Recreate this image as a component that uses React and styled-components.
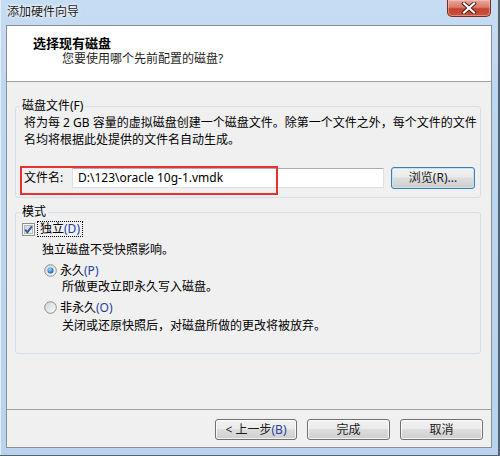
import React from "react";
import styled, { createGlobalStyle } from "styled-components";

const GlobalStyle = createGlobalStyle`
  html, body { margin: 0; padding: 0; }
  body {
    width: 500px;
    height: 456px;
    overflow: hidden;
    font-family: "Noto Sans", "Noto Sans CJK SC", sans-serif;
    font-size: 12px;
    color: #000;
  }
`;

const Window = styled.div`
  width: 500px;
  height: 456px;
  box-sizing: border-box;
  display: flex;
  flex-direction: column;
  padding: 0 8px 8px 6px;
  background: linear-gradient(180deg, #c6dcf3 0%, #bed7f0 20%, #b9d3ee 100%);
  box-shadow: inset -2px -1px 0 #56636f, inset 1px 0 0 #e2eef9;
`;

const TitleBar = styled.div`
  height: 25px;
  flex-shrink: 0;
  display: flex;
  justify-content: space-between;
  align-items: flex-start;
`;

const Title = styled.div`
  padding-left: 1px;
  line-height: 24px;
  font-size: 12px;
  color: #1a1a1a;
  text-shadow: 0 0 5px #fff, 0 0 3px #fff;
`;

const CloseButton = styled.div`
  width: 44px;
  height: 17px;
  margin-right: 1px;
  box-sizing: border-box;
  border: 1px solid #7b2a20;
  border-top: none;
  border-radius: 0 0 5px 5px;
  background: linear-gradient(180deg, #e8a99c 0%, #d97a6a 45%, #c4432f 55%, #c9533e 100%);
  box-shadow: inset 0 0 0 1px rgba(255, 210, 200, 0.45);
  display: flex;
  align-items: center;
  justify-content: center;
`;

const Client = styled.div`
  flex: 1;
  min-height: 0;
  display: flex;
  flex-direction: column;
  border: 1px solid #8b8f94;
  background: #f0f0f0;
`;

const Header = styled.div`
  height: 56px;
  box-sizing: border-box;
  flex-shrink: 0;
  background: #fff;
  border-bottom: 1px solid #a0a0a0;
  padding: 9px 0 0 26px;
`;

const HeaderTitle = styled.div`
  font-size: 13px;
  font-weight: bold;
  line-height: 16px;
`;

const HeaderSub = styled.div`
  margin-left: 29px;
  line-height: 16px;
  color: #1e1e1e;
`;

const Body = styled.div`
  flex: 1;
  padding: 16px 10px 0 8px;
`;

const Group = styled.fieldset`
  margin: ${(p) => p.$top || 0}px 0 0 0;
  padding: 0 0 ${(p) => p.$bottom || 0}px 0;
  border: 1px solid #d5dfe5;
  border-radius: 3px;
  min-width: 0;
`;

const Legend = styled.legend`
  margin-left: 4px;
  padding: 0 2px;
  line-height: 16px;
`;

const Para = styled.div`
  padding-left: 8px;
  line-height: 17px;
  white-space: nowrap;
`;

const FileRow = styled.div`
  position: relative;
  margin: 19px 0 0 8px;
  height: 22px;
  display: flex;
  align-items: center;
`;

const FieldLabel = styled.div`
  width: 48px;
  line-height: 16px;
`;

const TextBox = styled.div`
  width: 312px;
  height: 20px;
  box-sizing: border-box;
  border: 1px solid #dbdfe6;
  border-top-color: #abadb3;
  background: #fff;
  padding-left: 5px;
  line-height: 18px;
  white-space: nowrap;
`;

const Highlight = styled.div`
  position: absolute;
  left: -4px;
  top: -1px;
  width: 258px;
  height: 29px;
  box-sizing: border-box;
  border: 2px solid #e8322f;
  pointer-events: none;
`;

const Button = styled.div`
  width: ${(p) => p.$w || 83}px;
  height: ${(p) => p.$h || 21}px;
  margin-left: ${(p) => p.$ml || 0}px;
  box-sizing: border-box;
  border: 1px solid ${(p) => (p.$focused ? "#3c7fb1" : "#707070")};
  border-radius: 3px;
  background: linear-gradient(180deg, #f2f2f2 0%, #ebebeb 45%, #dddddd 50%, #cfcfcf 100%);
  box-shadow: inset 0 0 0 1px ${(p) => (p.$focused ? "#bfe3f7" : "rgba(255,255,255,0.75)")};
  display: flex;
  align-items: center;
  justify-content: center;
  line-height: 16px;
  color: #1a1a1a;
`;

const CheckRow = styled.div`
  margin-top: 1px;
  padding-left: 6px;
  height: 16px;
  display: flex;
  align-items: center;
`;

const FocusLabel = styled.span`
  margin-left: 2px;
  padding: 0 2px;
  border: 1px dotted #000;
  line-height: 14px;
`;

const Note = styled.div`
  margin-top: ${(p) => p.$top || 0}px;
  padding-left: ${(p) => p.$indent}px;
  line-height: 16px;
  white-space: nowrap;
`;

const RadioRow = styled.div`
  margin-top: ${(p) => p.$top || 0}px;
  padding-left: 28px;
  height: 16px;
  display: flex;
  align-items: center;
  gap: 3px;
`;

const Mnemonic = styled.span`
  color: #23409c;
`;

const Footer = styled.div`
  flex-shrink: 0;
  border-top: 1px solid #a0a0a0;
  padding: 9px 8px 7px 0;
  display: flex;
  justify-content: flex-end;
`;

function CheckBox() {
  return (
    <svg width="13" height="13" viewBox="0 0 13 13">
      <defs>
        <linearGradient id="cbIn" x1="0" y1="0" x2="1" y2="1">
          <stop offset="0" stopColor="#cbcfd5" />
          <stop offset="1" stopColor="#f6f6f6" />
        </linearGradient>
      </defs>
      <rect x="0.5" y="0.5" width="12" height="12" fill="#f4f4f4" stroke="#8e8f8f" />
      <rect x="2.5" y="2.5" width="8" height="8" fill="url(#cbIn)" stroke="#b4b9bf" />
      <path d="M3.2 6.6 L5.4 9.2 L9.9 3.4" stroke="#3d5496" strokeWidth="1.9" fill="none" />
    </svg>
  );
}

function Radio({ checked }) {
  return (
    <svg width="13" height="13" viewBox="0 0 13 13">
      <defs>
        <linearGradient id="rbOut" x1="0" y1="0" x2="1" y2="1">
          <stop offset="0" stopColor="#d0d3d8" />
          <stop offset="1" stopColor="#fbfbfb" />
        </linearGradient>
        <radialGradient id="rbDot" cx="0.4" cy="0.35" r="0.7">
          <stop offset="0" stopColor="#a8e2fb" />
          <stop offset="0.6" stopColor="#3a8ad6" />
          <stop offset="1" stopColor="#1d4f9e" />
        </radialGradient>
      </defs>
      <circle cx="6.5" cy="6.5" r="5.8" fill="url(#rbOut)" stroke="#8e8f8f" />
      {checked && <circle cx="6.5" cy="6.5" r="3" fill="url(#rbDot)" />}
    </svg>
  );
}

function CloseGlyph() {
  return (
    <svg width="16" height="12" viewBox="0 0 16 12">
      <path d="M3 1.5 L13 10.5 M13 1.5 L3 10.5" stroke="#4a1e18" strokeWidth="4" strokeLinecap="square" />
      <path d="M3 1.5 L13 10.5 M13 1.5 L3 10.5" stroke="#ffffff" strokeWidth="2.2" strokeLinecap="square" />
    </svg>
  );
}

export default function App() {
  return (
    <>
      <GlobalStyle />
      <Window>
        <TitleBar>
          <Title>添加硬件向导</Title>
          <CloseButton>
            <CloseGlyph />
          </CloseButton>
        </TitleBar>
        <Client>
          <Header>
            <HeaderTitle>选择现有磁盘</HeaderTitle>
            <HeaderSub>您要使用哪个先前配置的磁盘?</HeaderSub>
          </Header>
          <Body>
            <Group $bottom={8}>
              <Legend>磁盘文件(F)</Legend>
              <Para>
                将为每 2 GB 容量的虚拟磁盘创建一个磁盘文件。除第一个文件之外，每个文件的文件
                <br />
                名均将根据此处提供的文件名自动生成。
              </Para>
              <FileRow>
                <FieldLabel>文件名:</FieldLabel>
                <TextBox>D:\123\oracle 10g-1.vmdk</TextBox>
                <Button $w={84} $h={22} $ml={7} $focused>
                  浏览(R)...
                </Button>
                <Highlight />
              </FileRow>
            </Group>
            <Group $top={6} $bottom={19}>
              <Legend>模式</Legend>
              <CheckRow>
                <CheckBox />
                <FocusLabel>
                  独立<Mnemonic>(D)</Mnemonic>
                </FocusLabel>
              </CheckRow>
              <Note $top={5} $indent={26}>独立磁盘不受快照影响。</Note>
              <RadioRow $top={4}>
                <Radio checked />
                <span>
                  永久<Mnemonic>(P)</Mnemonic>
                </span>
              </RadioRow>
              <Note $top={1} $indent={46}>所做更改立即永久写入磁盘。</Note>
              <RadioRow $top={4}>
                <Radio />
                <span>
                  非永久<Mnemonic>(O)</Mnemonic>
                </span>
              </RadioRow>
              <Note $top={3} $indent={46}>关闭或还原快照后，对磁盘所做的更改将被放弃。</Note>
            </Group>
          </Body>
          <Footer>
            <Button $w={82}>
              &lt; 上一步<Mnemonic>(B)</Mnemonic>
            </Button>
            <Button $ml={10}>完成</Button>
            <Button $ml={10}>取消</Button>
          </Footer>
        </Client>
      </Window>
    </>
  );
}
